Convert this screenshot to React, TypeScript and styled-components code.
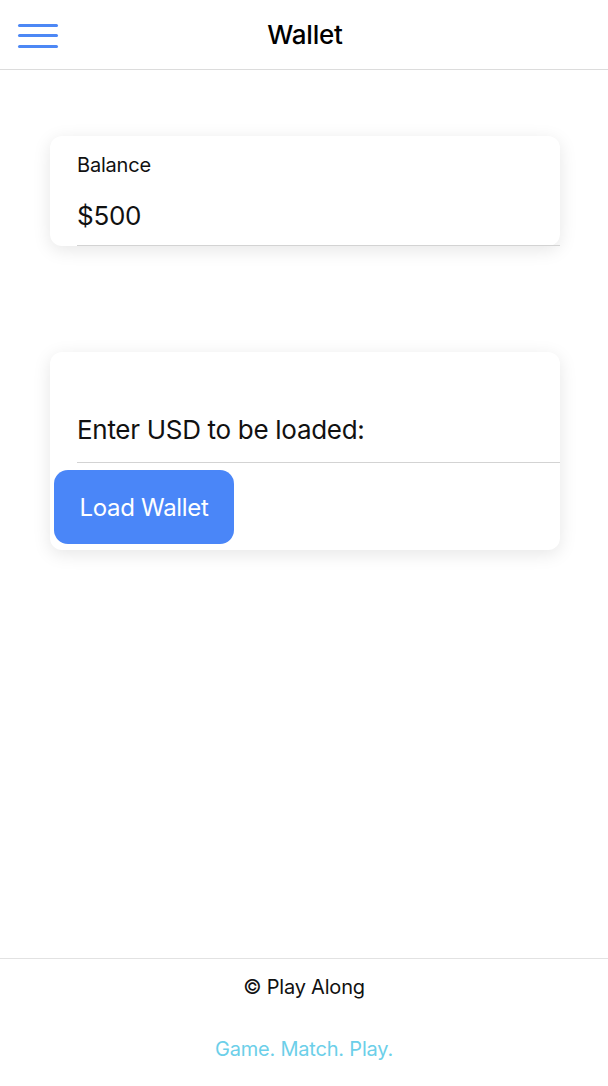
import React from "react";
import styled, { createGlobalStyle } from "styled-components";

const Global = createGlobalStyle`
  html, body { margin: 0; padding: 0; background: #ffffff; }
  body { font-family: Inter, "Helvetica Neue", "Liberation Sans", sans-serif; color: #111; }
  * { box-sizing: border-box; }
`;

const Page = styled.div`
  min-height: 100vh;
  display: flex;
  flex-direction: column;
`;

const Header = styled.header`
  height: 70px;
  border-bottom: 1px solid #dcdcdc;
  display: grid;
  grid-template-columns: 1fr auto 1fr;
  align-items: center;
  padding: 0 18px 0 18px;
`;

const MenuButton = styled.button`
  width: 40px;
  height: 24px;
  padding: 0;
  border: 0;
  background: transparent;
  display: flex;
  flex-direction: column;
  justify-content: space-between;
  justify-self: start;
  margin-top: 2px;
`;

const MenuLine = styled.span`
  display: block;
  height: 3px;
  border-radius: 2px;
  background: #4d88f5;
`;

const Title = styled.h1`
  margin: 0 0 0 2px;
  font-size: 26px;
  font-weight: 500;
  color: #000;
  letter-spacing: -0.2px;
`;

const Main = styled.main`
  flex: 1;
  display: flex;
  flex-direction: column;
  align-items: center;
  padding: 66px 0 0 2px;
  gap: 106px;
`;

const Card = styled.section`
  width: 510px;
  background: #fff;
  border-radius: 12px;
  box-shadow: 0 4px 18px rgba(0, 0, 0, 0.1);
  display: flex;
  flex-direction: column;
`;

const Field = styled.div<{ $top: number; $height: number }>`
  margin-left: 27px;
  padding-top: ${(p) => p.$top}px;
  height: ${(p) => p.$height}px;
  border-bottom: 1.5px solid #d3d3d3;
  display: flex;
  flex-direction: column;
`;

const Label = styled.div`
  font-size: 20px;
  line-height: 24px;
  color: #111;
  letter-spacing: -0.2px;
`;

const Value = styled.div<{ $mt: number }>`
  margin-top: ${(p) => p.$mt}px;
  font-size: 26px;
  line-height: 32px;
  color: #111;
  letter-spacing: -0.3px;
`;

const ButtonRow = styled.div`
  padding: 7px 0 6px 4px;
`;

const LoadButton = styled.button`
  width: 180px;
  height: 74px;
  border: 0;
  border-radius: 14px;
  background: #4a86f8;
  color: #fff;
  font-family: inherit;
  font-size: 24px;
  letter-spacing: -0.3px;
`;

const Footer = styled.footer`
  height: 128px;
  border-top: 1px solid #e2e2e2;
  display: flex;
  flex-direction: column;
  align-items: center;
`;

const Copy = styled.div`
  margin-top: 15px;
  font-size: 20px;
  line-height: 26px;
  color: #111;
  letter-spacing: -0.2px;
`;

const Tagline = styled.div`
  margin-top: 36px;
  font-size: 20px;
  line-height: 26px;
  color: #6ccfe9;
  letter-spacing: -0.2px;
`;

export default function App() {
  return (
    <Page>
      <Global />
      <Header>
        <MenuButton aria-label="Menu">
          <MenuLine />
          <MenuLine />
          <MenuLine />
        </MenuButton>
        <Title>Wallet</Title>
        <span />
      </Header>
      <Main>
        <Card>
          <Field $top={17} $height={110}>
            <Label>Balance</Label>
            <Value $mt={23}>$500</Value>
          </Field>
        </Card>
        <Card>
          <Field $top={62} $height={111}>
            <Value $mt={0}>Enter USD to be loaded:</Value>
          </Field>
          <ButtonRow>
            <LoadButton>Load Wallet</LoadButton>
          </ButtonRow>
        </Card>
      </Main>
      <Footer>
        <Copy>© Play Along</Copy>
        <Tagline>Game. Match. Play.</Tagline>
      </Footer>
    </Page>
  );
}
